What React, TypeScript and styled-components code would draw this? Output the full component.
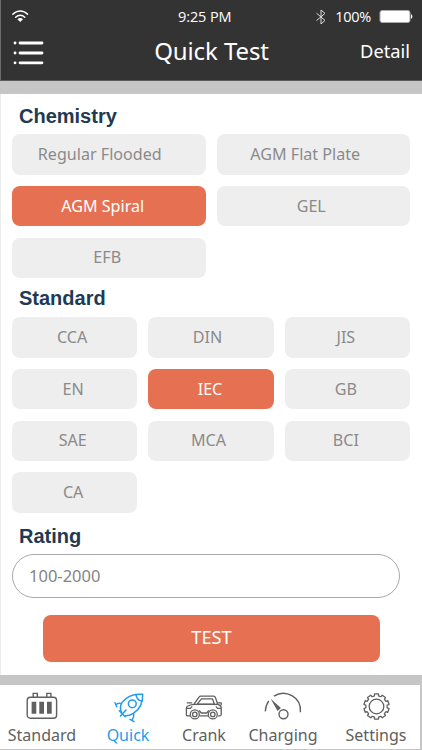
import React from "react";
import styled, { createGlobalStyle } from "styled-components";

const Global = createGlobalStyle`
  * { box-sizing: border-box; }
  body { margin: 0; background: #c6c6c6; }
  button, input { font: inherit; border: 0; margin: 0; }
`;

const Screen = styled.div`
  width: 422px;
  height: 750px;
  display: flex;
  flex-direction: column;
  overflow: hidden;
  background: #c6c6c6;
  font-family: "Noto Sans", "Open Sans", sans-serif;
`;

const Header = styled.header`
  height: 81px;
  flex: none;
  background: #333;
  color: #fff;
  border-left: 1px solid #6c6c6c;
  border-bottom: 1px solid #5b5b5b;
`;

const StatusBar = styled.div`
  height: 33px;
  display: grid;
  grid-template-columns: 167px 56px 1fr;
  align-items: center;
  padding: 0 9px 0 10px;
  font-family: "Open Sans", sans-serif;
  font-size: 14.5px;
  line-height: 20px;
`;

const Clock = styled.span`
  white-space: nowrap;
  letter-spacing: -0.1px;
`;

const StatusRight = styled.div`
  display: flex;
  justify-content: flex-end;
  align-items: center;
`;

const Percent = styled.span`
  margin: 0 8px 0 8px;
  letter-spacing: -0.3px;
`;

const TitleBar = styled.div`
  height: 40px;
  display: grid;
  grid-template-columns: 1fr 120px 1fr;
  align-items: center;
  padding: 0 12px;
`;

const Title = styled.h1`
  margin: 0;
  padding-bottom: 5px;
  font-size: 24px;
  line-height: 34px;
  font-weight: 400;
  letter-spacing: -0.1px;
  text-align: center;
  white-space: nowrap;
`;

const DetailLink = styled.button`
  justify-self: end;
  padding: 0 0 4px;
  background: none;
  color: #fff;
  font-size: 18.3px;
  line-height: 26px;
`;

const MenuButton = styled.button`
  justify-self: start;
  padding: 0;
  background: none;
  display: flex;
`;

const Panel = styled.main`
  height: 581px;
  margin-top: 13px;
  flex: none;
  background: #fff;
  border-left: 1px solid #ececec;
  padding: 0 12px 0 11px;
`;

const Heading = styled.h2<{ $height: number; $gap: number }>`
  height: ${(p) => p.$height}px;
  margin: 0;
  padding: 0 0 ${(p) => p.$gap}px 7px;
  display: flex;
  align-items: flex-end;
  font: bold 20px/23px "Liberation Sans", Arial, sans-serif;
  color: #1f3a54;
`;

const Options = styled.div<{ $columns: number }>`
  display: grid;
  grid-template-columns: repeat(${(p) => p.$columns}, 1fr);
  grid-auto-rows: 40.5px;
  gap: 11.3px 11px;
`;

const Option = styled.button<{ $active?: boolean; $inset: number }>`
  border-radius: 8px;
  padding: 0 ${(p) => p.$inset}px 1px 0;
  background: ${(p) => (p.$active ? "#e57152" : "#eee")};
  color: ${(p) => (p.$active ? "#fff" : "#8a8a8a")};
  font-size: 16.1px;
  line-height: 24px;
  white-space: nowrap;
`;

const RatingInput = styled.input`
  display: block;
  width: 388px;
  height: 44px;
  border: 1px solid #a9a9a9;
  border-radius: 22px;
  background: #fff;
  padding: 0 16px 1px;
  font-size: 16.5px;
  outline: none;
  &::placeholder { color: #858585; opacity: 1; }
`;

const TestButton = styled.button`
  display: block;
  width: 337px;
  height: 47px;
  margin: 17px 0 0 31px;
  padding: 0 0 4px;
  border-radius: 8px;
  background: #e57152;
  color: #fff;
  font-size: 18.3px;
`;

const TabBar = styled.nav`
  height: 65px;
  margin-top: 10px;
  flex: none;
  display: grid;
  grid-template-columns: 84px 88px 64px 94px 92px;
  background: #fff;
  border: solid #c6c6c6;
  border-width: 0 2px 1px 0;
`;

const Tab = styled.button<{ $active?: boolean }>`
  display: flex;
  flex-direction: column;
  align-items: center;
  padding: 5px 0 0;
  background: none;
  color: ${(p) => (p.$active ? "#1d9cf0" : "#606060")};
  font-size: 16px;
  line-height: 24px;
  svg { display: block; height: 33px; flex: none; overflow: visible; }
`;

const WifiIcon = () => (
  <svg width="18" height="13" viewBox="0 0 18 13" fill="none" stroke="#fff" strokeWidth="1.4" strokeLinecap="round">
    <path d="M1.8 4.3C6-.1 12.6-.1 16.6 4.3M4.6 7.2c2.8-2.7 6.6-2.7 9.2 0" />
    <path d="M6.4 9.2c1.6-1.5 4-1.5 5.6 0L9.2 12Z" fill="#fff" stroke="none" />
  </svg>
);

const BluetoothIcon = () => (
  <svg width="12" height="16" viewBox="0 0 12 16" fill="none" stroke="#ddd" strokeWidth="1">
    <path d="M1.5 4.2 10 11.4 6 15V1l4 3.4-8.5 7.2" />
  </svg>
);

const BatteryIcon = () => (
  <svg width="34" height="15" viewBox="0 0 34 15">
    <rect x="1" y="1.5" width="30" height="12" rx="2.2" fill="#fff" stroke="#aaa" />
    <path d="M32 5.2c1.8.5 1.8 4.1 0 4.6Z" fill="#fff" />
  </svg>
);

const MenuIcon = () => (
  <svg width="32" height="26" viewBox="0 0 32 26" stroke="#fff" strokeWidth="2.8" strokeLinecap="round">
    <path d="M7 3h22M7 13h22M7 22.8h22M2 3h.1M2 13h.1M2 22.8h.1" />
  </svg>
);

const BatteryTabIcon = () => (
  <svg width="32" viewBox="0 0 32 33" fill="none" stroke="currentColor" strokeWidth="1.4">
    <rect x="1.2" y="7.3" width="29.4" height="20.9" rx="3.2" />
    <path d="M7.2 7V3.4h4.1V7M20.8 7V3.4h4.1V7" />
    <path d="M5.6 11.8h4.7v12H5.6ZM13.3 11.8H18v12h-4.7ZM21 11.8h4.7v12H21Z" fill="currentColor" stroke="none" />
  </svg>
);

const RocketIcon = () => (
  <svg width="32" viewBox="0 0 32 33" fill="none" stroke="currentColor" strokeWidth="1.5" strokeLinejoin="round" strokeLinecap="round">
    <path d="M9.4 22.6C8.2 19 7.6 16 10 12.4 14.8 6.2 21.6 3.4 30.7 4.3c.3 8.3-2.6 14.6-9 18.8-3.2 2.2-5.8 2.9-8.6 2.7" />
    <path d="M24 4.6c.4 3.4 2.4 5.8 6 6.6" />
    <circle cx="20.3" cy="13.8" r="3.9" />
    <path d="M9.2 13.6C7 12.9 5.4 13.4 3.8 15M3 12.8l1.8 4M21.6 24c.5 2-.1 4-1.6 6.2M18 29.4l4 2.2M7.3 20.7l5.9 6.1M14 20l-5.6 6" />
  </svg>
);

const CarIcon = () => (
  <svg width="38" viewBox="0 0 38 33" fill="none" stroke="currentColor" strokeWidth="1.3" strokeLinejoin="round">
    <path d="M5 25.9H2.6c-.8 0-1.2-.5-1.2-1.3V18c0-1.8 1.8-2.8 7.4-3.6l5.4-7.5c.4-.6.9-.8 1.6-.8h12.8c.9 0 1.4.4 1.7 1.2l2.5 7.1c2.5.9 3.4 1.7 3.4 3.1v6.9c0 1-.5 1.5-1.5 1.5h-1.6M14.6 25.9H23M8.8 14.4h23.5" />
    <path d="M12.2 14.2 16.4 8.8h11l2.1 5.4ZM1.8 12.9h5.4M31.8 12.9h4.4v2.3M2 18.4h3.4l1.8-2M36 18.4h-3.4l-1.8-2M14.2 20.4l2 2.6h5.6l2-2.6" />
    <circle cx="9.8" cy="24.4" r="4.5" />
    <circle cx="9.8" cy="24.4" r="2.2" />
    <circle cx="27.8" cy="24.4" r="4.5" />
    <circle cx="27.8" cy="24.4" r="2.2" />
  </svg>
);

const GaugeIcon = () => (
  <svg width="38" viewBox="0 0 38 33" fill="none" stroke="currentColor" strokeWidth="1.4">
    <path d="M1.3 21.4C1.5 17.4 2.5 14 4.8 10.8M9.9 6.1C21.4-.9 37.6 6.7 36.4 22.2" />
    <circle cx="19.5" cy="24.3" r="4.5" />
    <path d="M6.7 8.7 16.9 18l-3.3 3Z" fill="currentColor" stroke="none" />
  </svg>
);

const teeth = Array.from({ length: 10 }, (_, i) => {
  const at = (radius: number, degrees: number) => {
    const a = ((i * 36 + 18 + degrees) * Math.PI) / 180;
    return `${(13.5 + radius * Math.cos(a)).toFixed(2)} ${(16.5 + radius * Math.sin(a)).toFixed(2)}`;
  };
  return `${at(10.6, -18)}L${at(10.8, -11)}L${at(12.7, -9)}L${at(12.7, 9)}L${at(10.8, 11)}L${at(10.6, 18)}`;
});

const GearIcon = () => (
  <svg width="27" viewBox="0 0 27 33" fill="none" stroke="currentColor" strokeWidth="1.3" strokeLinejoin="round">
    <path d={`M${teeth.join("L")}Z`} />
    <circle cx="13.5" cy="16.5" r="7.3" />
  </svg>
);

type Choice = { label: string; inset: number };

const chemistry: Choice[] = [
  { label: "Regular Flooded", inset: 18 },
  { label: "AGM Flat Plate", inset: 16 },
  { label: "AGM Spiral", inset: 12 },
  { label: "GEL", inset: 4 },
  { label: "EFB", inset: 3 },
];

const standards: Choice[] = [
  { label: "CCA", inset: 5 },
  { label: "DIN", inset: 7 },
  { label: "JIS", inset: 3 },
  { label: "EN", inset: 3 },
  { label: "IEC", inset: 2 },
  { label: "GB", inset: 3 },
  { label: "SAE", inset: 4 },
  { label: "MCA", inset: 5 },
  { label: "BCI", inset: 3 },
  { label: "CA", inset: 3 },
];

const tabs = [
  { label: "Standard", icon: <BatteryTabIcon /> },
  { label: "Quick", icon: <RocketIcon /> },
  { label: "Crank", icon: <CarIcon /> },
  { label: "Charging", icon: <GaugeIcon /> },
  { label: "Settings", icon: <GearIcon /> },
];

export default function App() {
  return (
    <>
      <Global />
      <Screen>
        <Header>
          <StatusBar>
            <WifiIcon />
            <Clock>9:25 PM</Clock>
            <StatusRight>
              <BluetoothIcon />
              <Percent>100%</Percent>
              <BatteryIcon />
            </StatusRight>
          </StatusBar>
          <TitleBar>
            <MenuButton aria-label="Menu"><MenuIcon /></MenuButton>
            <Title>Quick Test</Title>
            <DetailLink>Detail</DetailLink>
          </TitleBar>
        </Header>
        <Panel>
          <Heading $height={40} $gap={6.5}>Chemistry</Heading>
          <Options $columns={2}>
            {chemistry.map((c) => (
              <Option key={c.label} $inset={c.inset} $active={c.label === "AGM Spiral"}>{c.label}</Option>
            ))}
          </Options>
          <Heading $height={39} $gap={7}>Standard</Heading>
          <Options $columns={3}>
            {standards.map((c) => (
              <Option key={c.label} $inset={c.inset} $active={c.label === "IEC"}>{c.label}</Option>
            ))}
          </Options>
          <Heading $height={41} $gap={5.5}>Rating</Heading>
          <RatingInput placeholder="100-2000" />
          <TestButton>TEST</TestButton>
        </Panel>
        <TabBar>
          {tabs.map((t) => (
            <Tab key={t.label} $active={t.label === "Quick"}>
              {t.icon}
              <span>{t.label}</span>
            </Tab>
          ))}
        </TabBar>
      </Screen>
    </>
  );
}
